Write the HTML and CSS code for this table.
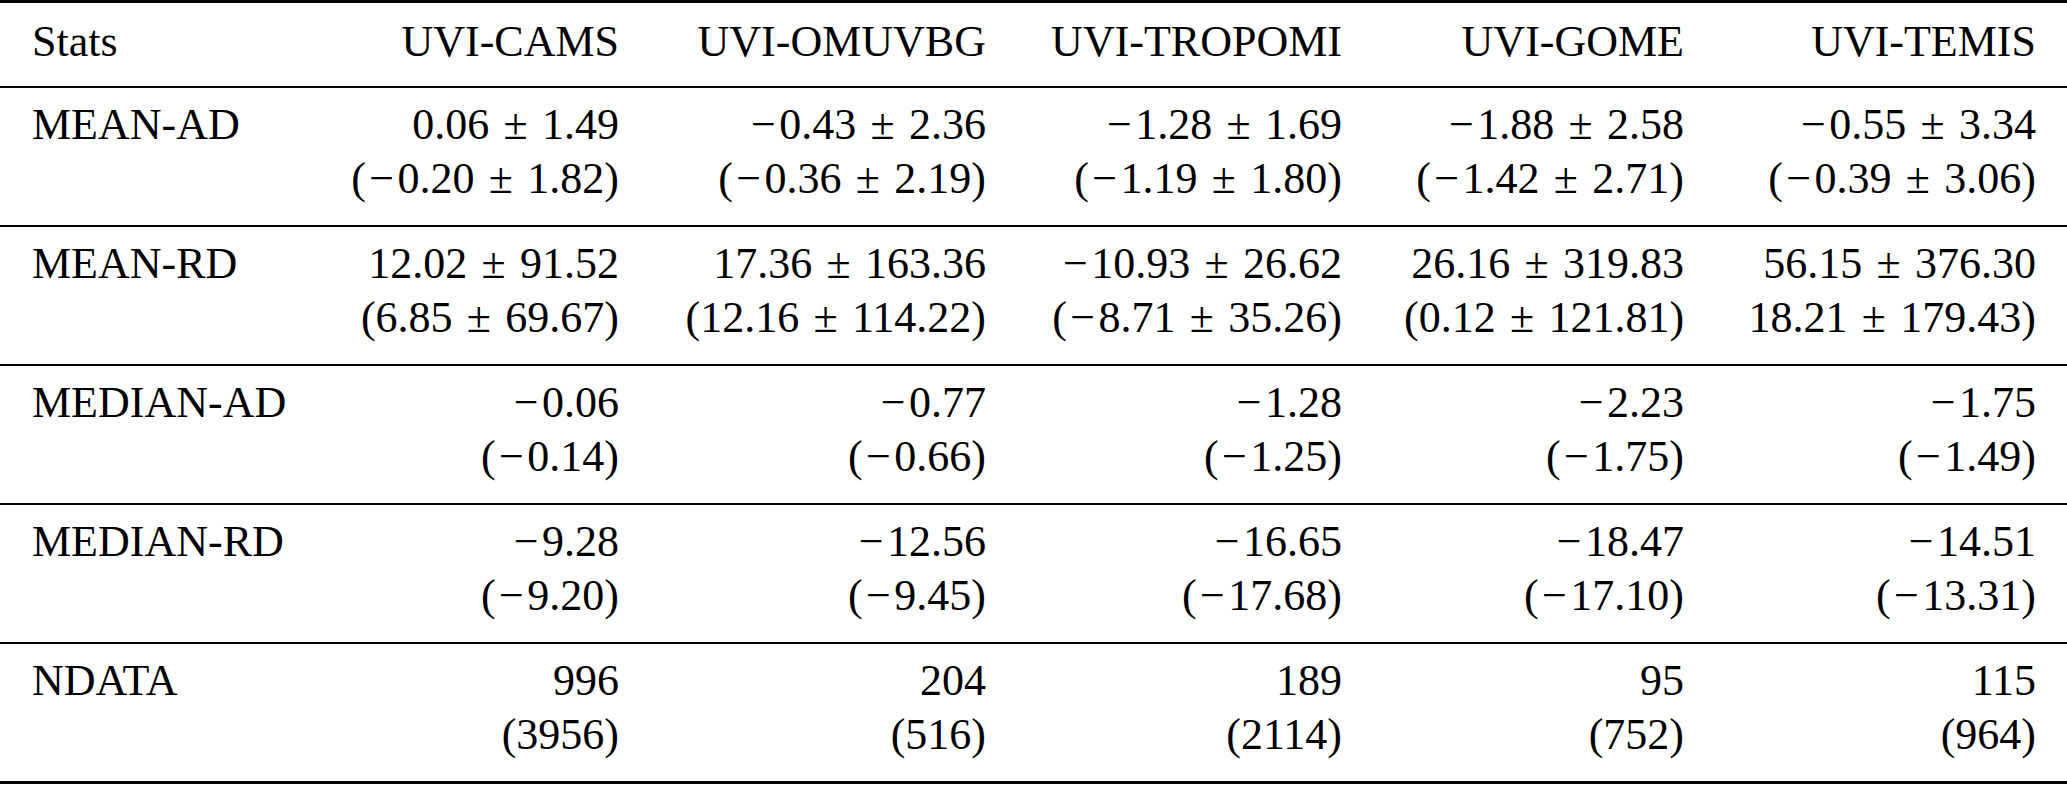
FILE: index.html
```html
<!DOCTYPE html>
<html lang="en">
<head>
    <meta charset="UTF-8">
    <title>UVI stats</title>
    <link rel="stylesheet" href="styles.css">
</head>
<body>
    <table class="stats-table">
        <colgroup>
            <col class="col-label">
            <col class="col-cams">
            <col class="col-omuvbg">
            <col class="col-tropomi">
            <col class="col-gome">
            <col class="col-temis">
        </colgroup>
        <thead>
            <tr>
                <th>Stats</th>
                <th>UVI-CAMS</th>
                <th>UVI-OMUVBG</th>
                <th>UVI-TROPOMI</th>
                <th>UVI-GOME</th>
                <th>UVI-TEMIS</th>
            </tr>
        </thead>
        <tbody>
            <!-- math minus and plus-minus are wider than the text glyphs -->
            <tr>
                <td>MEAN-AD</td>
                <td>0.06<span class="pm">±</span>1.49<br>(<span class="neg">−</span>0.20<span class="pm">±</span>1.82)</td>
                <td><span class="neg">−</span>0.43<span class="pm">±</span>2.36<br>(<span class="neg">−</span>0.36<span class="pm">±</span>2.19)</td>
                <td><span class="neg">−</span>1.28<span class="pm">±</span>1.69<br>(<span class="neg">−</span>1.19<span class="pm">±</span>1.80)</td>
                <td><span class="neg">−</span>1.88<span class="pm">±</span>2.58<br>(<span class="neg">−</span>1.42<span class="pm">±</span>2.71)</td>
                <td><span class="neg">−</span>0.55<span class="pm">±</span>3.34<br>(<span class="neg">−</span>0.39<span class="pm">±</span>3.06)</td>
            </tr>
            <tr>
                <td>MEAN-RD</td>
                <td>12.02<span class="pm">±</span>91.52<br>(6.85<span class="pm">±</span>69.67)</td>
                <td>17.36<span class="pm">±</span>163.36<br>(12.16<span class="pm">±</span>114.22)</td>
                <td><span class="neg">−</span>10.93<span class="pm">±</span>26.62<br>(<span class="neg">−</span>8.71<span class="pm">±</span>35.26)</td>
                <td>26.16<span class="pm">±</span>319.83<br>(0.12<span class="pm">±</span>121.81)</td>
                <td>56.15<span class="pm">±</span>376.30<br>18.21<span class="pm">±</span>179.43)</td>
            </tr>
            <tr>
                <td>MEDIAN-AD</td>
                <td><span class="neg">−</span>0.06<br>(<span class="neg">−</span>0.14)</td>
                <td><span class="neg">−</span>0.77<br>(<span class="neg">−</span>0.66)</td>
                <td><span class="neg">−</span>1.28<br>(<span class="neg">−</span>1.25)</td>
                <td><span class="neg">−</span>2.23<br>(<span class="neg">−</span>1.75)</td>
                <td><span class="neg">−</span>1.75<br>(<span class="neg">−</span>1.49)</td>
            </tr>
            <tr>
                <td>MEDIAN-RD</td>
                <td><span class="neg">−</span>9.28<br>(<span class="neg">−</span>9.20)</td>
                <td><span class="neg">−</span>12.56<br>(<span class="neg">−</span>9.45)</td>
                <td><span class="neg">−</span>16.65<br>(<span class="neg">−</span>17.68)</td>
                <td><span class="neg">−</span>18.47<br>(<span class="neg">−</span>17.10)</td>
                <td><span class="neg">−</span>14.51<br>(<span class="neg">−</span>13.31)</td>
            </tr>
            <tr>
                <td>NDATA</td>
                <td>996<br>(3956)</td>
                <td>204<br>(516)</td>
                <td>189<br>(2114)</td>
                <td>95<br>(752)</td>
                <td>115<br>(964)</td>
            </tr>
        </tbody>
    </table>
</body>
</html>
```

FILE: styles.css
```css
body {
    margin: 0;
    padding: 0;
    background: #fff;
    color: #000;
    font-family: "Liberation Serif", "Times New Roman", serif;
}

.stats-table {
    width: 2067px;
    table-layout: fixed;
    border-collapse: collapse;
    font-size: 44px;
    line-height: 54px;
    border-top: 3px solid #000;
    border-bottom: 3px solid #000;
}

.col-label { width: 300px; }
.col-cams { width: 350px; }
.col-omuvbg { width: 367px; }
.col-tropomi { width: 356px; }
.col-gome { width: 342px; }
.col-temis { width: 352px; }

.stats-table th,
.stats-table td {
    padding: 10px 31px 19px 31px;
    text-align: right;
    vertical-align: top;
    white-space: nowrap;
    font-weight: normal;
}

.stats-table th {
    padding-top: 12px;
    padding-bottom: 17px;
}

.stats-table th:first-child,
.stats-table td:first-child {
    text-align: left;
    padding-left: 32px;
}

.stats-table tr {
    border-bottom: 2px solid #000;
}

.stats-table tbody tr:last-child {
    border-bottom: none;
}

.neg {
    display: inline-block;
    width: 0.72em;
    text-align: center;
}

.pm {
    display: inline-block;
    width: 1.2em;
    text-align: center;
}
```
